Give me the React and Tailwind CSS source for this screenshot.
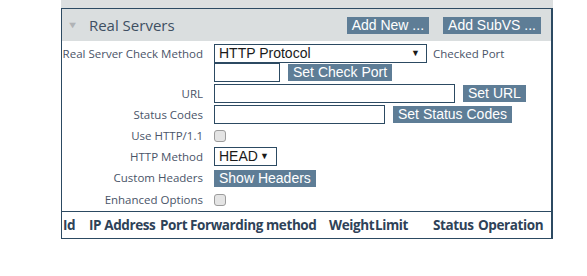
import React from "react"

const label = "w-[141px] shrink-0 text-right text-[11.5px] text-[#4a5468] font-['Open_Sans',sans-serif]"
const btn = "bg-[#5e7d96] text-white text-[14px] leading-[17px] h-[17px] px-[5px] whitespace-nowrap"
const box = "border border-[#2c4a62] bg-white h-[19px]"

function Check() {
  return <div className="w-[12px] h-[12px] rounded-[3px] border border-[#9c9c9c] bg-[#e4e4e4]" />
}

function App() {
  const cols = [
    ["Id", "w-[27px]"],
    ["IP Address", "w-[71px]"],
    ["Port", "w-[30px]"],
    ["Forwarding method", "w-[139px]"],
    ["Weight", "w-[46px]"],
    ["Limit", "w-[58px]"],
    ["Status", "w-[45px]"],
    ["Operation", "w-[70px]"],
  ]

  return (
    <div className="w-[587px] h-[276px] bg-white font-['Open_Sans',sans-serif]">
      <div className="ml-[61px] w-[492px] h-[8px] bg-[#dcdfe0]" />

      <div className="ml-[61px] w-[492px] border border-r-2 border-[#2c4a62]">
        {/* header */}
        <div className="h-[32px] bg-[#dadedf] flex items-center pl-[6px] pr-[10px]">
          <span className="text-[#b0b3b6] text-[9px] mr-[12px] scale-x-125">▼</span>
          <span className="text-[15px] text-[#3e4f62]">Real Servers</span>
          <div className="ml-auto flex gap-[14px] font-['Liberation_Sans',sans-serif]">
            <div className={btn}>Add New ...</div>
            <div className={btn}>Add SubVS ...</div>
          </div>
        </div>

        {/* form */}
        <div className="pt-[2px] font-['Liberation_Sans',sans-serif]">
          <div className="flex items-start gap-[11px] h-[20px] pt-[1px]">
            <div className={label + " leading-[19px] text-[#4a4470]"}>Real Server Check Method</div>
            <div className={box + " w-[213px] flex items-center px-[4px] text-[14px] text-[#1a1a1a]"}>
              HTTP Protocol
              <span className="ml-auto text-[9px] pr-[2px]">▼</span>
            </div>
            <div className="font-['Open_Sans',sans-serif] text-[11.5px] text-[#4a5468] leading-[19px] ml-[-5px]">Checked Port</div>
          </div>
          <div className="flex items-start gap-[11px] h-[20px]">
            <div className={label} />
            <div className={box + " w-[66px]"} />
            <div className={btn + " mt-[1px] ml-[-3px]"}>Set Check Port</div>
          </div>

          <div className="flex items-center gap-[11px] h-[21px]">
            <div className={label}>URL</div>
            <div className={box + " w-[241px]"} />
            <div className={btn + " ml-[-3px]"}>Set URL</div>
          </div>
          <div className="flex items-center gap-[11px] h-[21px]">
            <div className={label}>Status Codes</div>
            <div className={box + " w-[171px]"} />
            <div className={btn + " ml-[-3px]"}>Set Status Codes</div>
          </div>
          <div className="flex items-center gap-[11px] h-[21px]">
            <div className={label}>Use HTTP/1.1</div>
            <Check />
          </div>
          <div className="flex items-center gap-[11px] h-[21px]">
            <div className={label}>HTTP Method</div>
            <div className={box + " w-[63px] flex items-center px-[4px] text-[14px] text-[#1a1a1a]"}>
              HEAD
              <span className="ml-auto text-[9px] pr-[3px]">▼</span>
            </div>
          </div>
          <div className="flex items-center gap-[11px] h-[22px]">
            <div className={label}>Custom Headers</div>
            <div className={btn}>Show Headers</div>
          </div>
          <div className="flex items-center gap-[11px] h-[21px]">
            <div className={label}>Enhanced Options</div>
            <Check />
          </div>
        </div>

        {/* table head */}
        <div className="mt-[1px] border-t border-[#2c4a62] h-[27px] flex items-center text-[13.5px] font-bold text-[#2e4258] tracking-[-0.4px]">
          {cols.map(([t, w]) => (
            <div key={t} className={w + " whitespace-nowrap" + (t === "Id" ? " pl-[1px]" : "")}>{t}</div>
          ))}
        </div>
      </div>
    </div>
  )
}

export default App
